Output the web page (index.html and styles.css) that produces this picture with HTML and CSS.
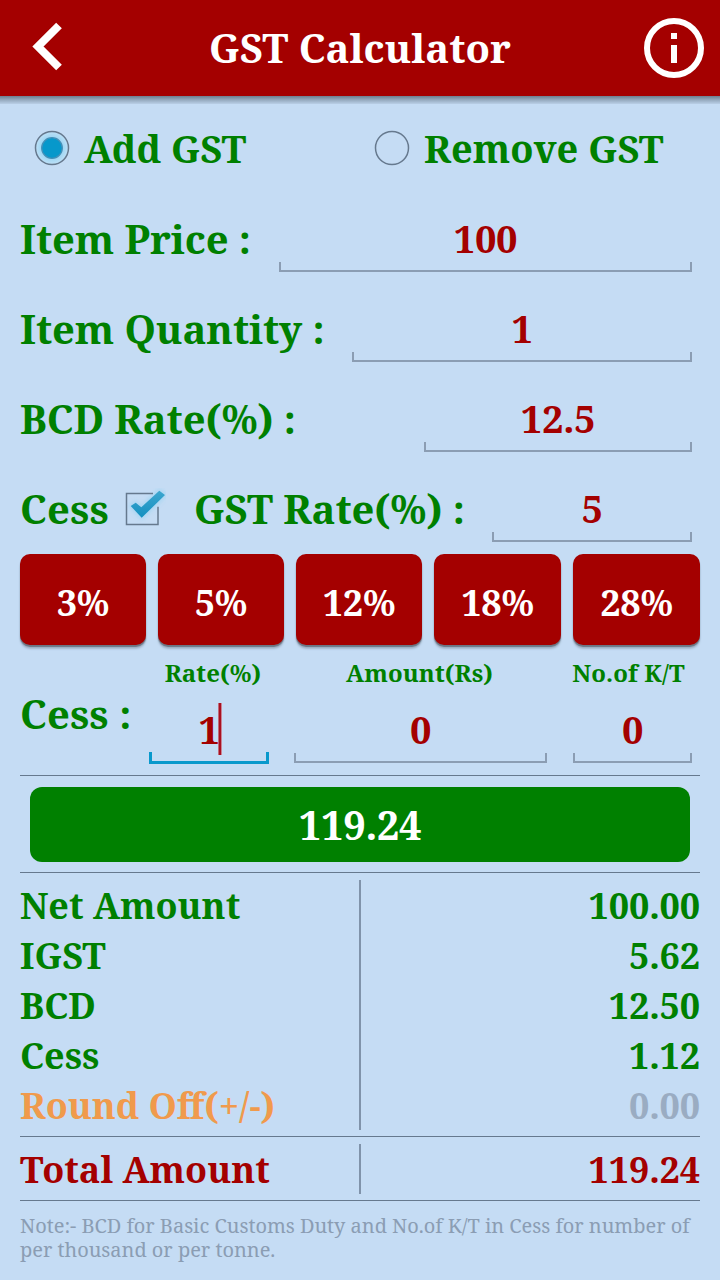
FILE: index.html
```html
<!DOCTYPE html>
<html lang="en">
<head>
<meta charset="utf-8">
<title>GST Calculator</title>
<link rel="stylesheet" href="styles.css">
</head>
<body>
<header class="bar">
  <svg class="back" width="32" height="50" viewBox="0 0 32 50"><path d="M28 3.500L7 24.500L28 45.500" fill="none" stroke="#fff" stroke-width="8"/></svg>
  <h1 class="title">GST Calculator</h1>
  <svg width="60" height="60" viewBox="0 0 60 60"><circle cx="30" cy="30" r="27" fill="none" stroke="#fff" stroke-width="6"/><path d="M27 15h6v6h-6zM27 27h6v18h-6z" fill="#fff"/></svg>
</header>
<main class="page">
  <div class="modes">
    <div class="mode"><svg width="36" height="36" viewBox="0 0 36 36"><defs><radialGradient id="glow"><stop offset=".6" stop-color="#9bd5f2"/><stop offset="1" stop-color="#bfe0f7"/></radialGradient></defs><circle cx="18" cy="18" r="16.500" fill="url(#glow)" stroke="#66798e" stroke-width="1.500"/><circle cx="18" cy="18" r="10.300" fill="#0798cb" stroke="#4590b8" stroke-width="1.300"/></svg><span>Add GST</span></div>
    <div class="mode"><svg width="36" height="36" viewBox="0 0 36 36"><circle cx="18" cy="18" r="16.500" fill="none" stroke="#66798e" stroke-width="1.500"/></svg><span>Remove GST</span></div>
  </div>
  <div class="row"><span class="label">Item Price :</span><div class="field price">100</div></div>
  <div class="row"><span class="label">Item Quantity :</span><div class="field qty">1</div></div>
  <div class="row"><span class="label">BCD Rate(%) :</span><div class="field bcd">12.5</div></div>
  <div class="row"><span class="label cess-label">Cess</span>
    <svg class="check" width="42" height="40" viewBox="0 0 42 40"><defs><linearGradient id="tick" x1="0" y1="0" x2="0" y2="1"><stop offset="0" stop-color="#3da6cf"/><stop offset="1" stop-color="#1390c0"/></linearGradient><filter id="halo" x="-30%" y="-30%" width="160%" height="160%"><feGaussianBlur stdDeviation="2"/></filter></defs><path d="M6.700 18L11.700 14.700L17.300 19.300L35.300 2.700L41 7L17.700 29.700Z" fill="#8fd0f0" stroke="#8fd0f0" stroke-width="3" opacity=".6" filter="url(#halo)"/><path d="M29 5.500H2.500V36.500H34V18.700" fill="none" stroke="#66798e" stroke-width="1.500"/><path d="M6.700 18L11.700 14.700L17.300 19.300L35.300 2.700L41 7L17.700 29.700Z" fill="url(#tick)"/></svg>
    <span class="label">GST Rate(%) :</span><div class="field gst">5</div></div>
  <div class="rates">
    <button class="rate">3%</button><button class="rate">5%</button><button class="rate">12%</button><button class="rate">18%</button><button class="rate">28%</button>
  </div>
  <div class="cess">
    <span class="cess-name">Cess :</span>
    <div class="col c1"><span class="head">Rate(%)</span><div class="field on">1<i class="caret"></i></div></div>
    <div class="col c2"><span class="head">Amount(Rs)</span><div class="field">0</div></div>
    <div class="col c3"><span class="head">No.of K/T</span><div class="field">0</div></div>
  </div>
  <div class="answer"><div class="pill">119.24</div></div>
  <div class="lines">
    <div class="line"><span>Net Amount</span><span class="num">100.00</span></div>
    <div class="line"><span>IGST</span><span class="num">5.62</span></div>
    <div class="line"><span>BCD</span><span class="num">12.50</span></div>
    <div class="line"><span>Cess</span><span class="num">1.12</span></div>
    <div class="line off"><span>Round Off(+/-)</span><span class="num faded">0.00</span></div>
  </div>
  <div class="lines total"><div class="line"><span>Total Amount</span><span class="num">119.24</span></div></div>
  <p class="note">Note:- BCD for Basic Customs Duty and No.of K/T in Cess for number of per thousand or per tonne.</p>
</main>
</body>
</html>
```
FILE: styles.css
```css
*{box-sizing:border-box}
body{margin:0;width:720px;height:1280px;background:#c5dcf4;color:#008000;font-family:"Noto Serif","Droid Serif","DejaVu Serif Condensed",serif;font-weight:bold;font-size:40px;overflow:hidden}
svg{flex:none}
.bar{height:96px;background:#a40000;color:#fff;display:flex;align-items:center;padding:0 16px 0 31px;position:relative}
.bar::after{content:"";position:absolute;left:0;right:0;top:96px;height:8px;background:linear-gradient(#6c7f8f,#93a7bb 45%,#b9cfe7)}
.back{margin-top:-2px}
.title{flex:1;text-align:center;font-size:40px;margin:0;padding:0 0 1px 13px}
.page{padding:0 20px}
.modes{display:flex;height:98px;padding:12px 0 0 14px;font-size:38px}
.mode{flex:none;width:340px;display:flex;align-items:center;gap:14px;height:80px}
.row{height:90px;display:flex;align-items:center;padding:0 8px 2px 0}
.label{white-space:nowrap;letter-spacing:-.1px}
.cess-label{letter-spacing:.2px}
.check{margin:0 28px 0 15px}
.field{height:68px;margin-left:auto;color:#a40000;font-size:38px;letter-spacing:-.3px;display:flex;align-items:center;justify-content:center;position:relative}
.field::after{content:"";position:absolute;left:0;right:0;bottom:0;height:8px;border:2px solid #8b9db3;border-top:0}
.price{width:413px}
.qty{width:340px}
.bcd{width:268px}
.gst{width:200px}
.rates{display:grid;grid-template-columns:126px 126px 126px 127px 127px;gap:12px;height:91px}
.rate{border:0;border-radius:10px;background:#a40000;color:#fff;font:inherit;font-size:36px;letter-spacing:-.2px;padding:5px 0 0;box-shadow:0 2px 1px #6b7785,0 4px 2px #a3b6cb}
.cess{display:flex;height:130px;padding-top:11px}
.cess-name{width:129px;padding-top:30px;white-space:nowrap;letter-spacing:.15px}
.col{display:flex;flex-direction:column;font-size:24px}
.c1{width:120px}
.c2{width:253px;margin-left:25px}
.c3{width:119px;margin-left:26px}
.col .field{width:100%;margin-top:6px}
.head{text-align:center;white-space:nowrap;line-height:33px;letter-spacing:.1px}
.c1 .head{padding-left:8px}
.c2 .head{padding-right:2px}
.c3 .head{margin-left:-2px;padding-right:6px}
.on::after{border:3px solid #0999cc;border-top:0;height:9px;bottom:-1px}
.caret{position:absolute;left:69px;top:8px;width:4px;height:52px;background:linear-gradient(90deg,#c06a7a 1px,#a81020 1px 3px,#c98596 3px)}
.answer{border:solid #66798e;border-width:1px 0;height:98px;padding:11px 10px}
.pill{background:#008000;color:#fff;border-radius:12px;height:75px;display:flex;align-items:center;justify-content:center;letter-spacing:-.4px}
.lines{padding:7px 0 6px;border-bottom:1px solid #66798e}
.line{height:50px;display:flex;justify-content:space-between;align-items:center;font-size:36px;background:linear-gradient(#8093aa,#8093aa) 339px 0/2px 100% no-repeat}
.num{letter-spacing:-.15px}
.off{color:#f09a4c}
.faded{color:#9aacc2}
.total{color:#a40000}
.note{font-size:20px;line-height:24px;font-weight:normal;color:#8b9db3;letter-spacing:-.03px;margin:13px 0 0}
```
